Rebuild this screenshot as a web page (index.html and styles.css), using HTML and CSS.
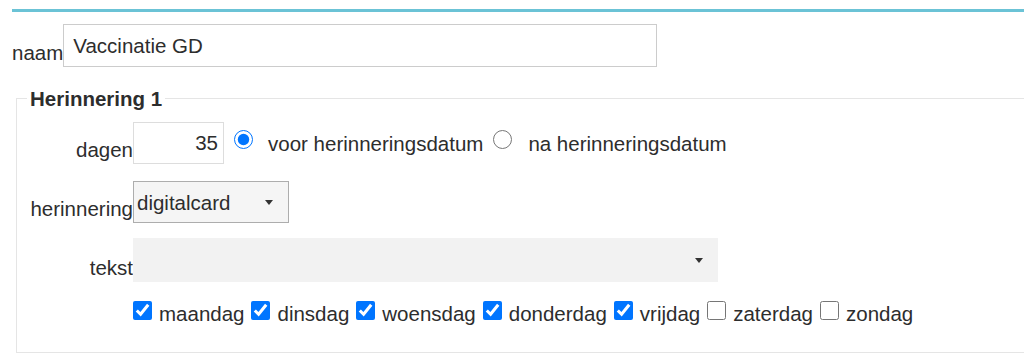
FILE: index.html
```html
<!DOCTYPE html>
<html lang="nl">
<head>
    <meta charset="UTF-8">
    <meta name="viewport" content="width=device-width, initial-scale=1.0">
    <title>Herinnering</title>
    <link rel="stylesheet" href="styles.css">
</head>
<body>
    <div class="page">
        <div class="topline"></div>

        <!-- Naam -->
        <div class="name-row">
            <label class="name-label" for="naam">naam</label>
            <input id="naam" class="name-input" type="text" value="Vaccinatie GD">
        </div>

        <!-- Herinnering 1 -->
        <fieldset class="reminder">
            <legend>Herinnering 1</legend>

            <div class="field-row field-row-first">
                <label class="field-label" for="dagen">dagen</label>
                <div class="field-controls">
                    <input id="dagen" class="days-input" type="text" value="35">
                    <input class="radio" type="radio" name="moment" id="voor" checked>
                    <label class="radio-label" for="voor">voor herinneringsdatum</label>
                    <input class="radio radio-second" type="radio" name="moment" id="na">
                    <label class="radio-label" for="na">na herinneringsdatum</label>
                </div>
            </div>

            <div class="field-row field-row-type">
                <span class="field-label">herinnering</span>
                <div class="dropdown dropdown-type">
                    <span>digitalcard</span>
                    <span class="caret"></span>
                </div>
            </div>

            <div class="field-row field-row-text">
                <span class="field-label">tekst</span>
                <div class="dropdown dropdown-text">
                    <span></span>
                    <span class="caret"></span>
                </div>
            </div>

            <div class="days-row">
                <label class="day"><input type="checkbox" checked>maandag</label>
                <label class="day"><input type="checkbox" checked>dinsdag</label>
                <label class="day"><input type="checkbox" checked>woensdag</label>
                <label class="day"><input type="checkbox" checked>donderdag</label>
                <label class="day"><input type="checkbox" checked>vrijdag</label>
                <label class="day"><input type="checkbox">zaterdag</label>
                <label class="day"><input type="checkbox">zondag</label>
            </div>
        </fieldset>
    </div>
</body>
</html>
```

FILE: styles.css
```css
:root {
    --text-primary: #2d2d2d;
    --line-accent: #6bc3d6;
    --border-light: #e5e5e5;
    --border-input: #cccccc;
    --border-select: #adadad;
    --bg-select: #f5f5f5;
    --bg-select-flat: #f2f2f2;
    --label-width: 116px;
}

* {
    box-sizing: border-box;
}

html,
body {
    margin: 0;
    padding: 0;
    overflow: hidden;
}

body {
    font-family: 'Liberation Sans', Arial, sans-serif;
    font-size: 20.5px;
    line-height: 23px;
    color: var(--text-primary);
    background-color: #fff;
}

.page {
    width: 1100px;
    padding: 9px 0 0 12px;
}

.topline {
    height: 3px;
    background-color: var(--line-accent);
}

input {
    font-family: inherit;
    font-size: 20.5px;
    color: var(--text-primary);
    margin: 0;
}

.name-row {
    display: flex;
    align-items: flex-end;
    margin-top: 12px;
}

.name-label {
    padding-bottom: 3px;
}

.name-input {
    width: 594px;
    height: 43px;
    border: 1px solid var(--border-input);
    padding: 0 9px;
    outline: none;
}

.reminder {
    margin: 20px 0 0 4px;
    border: 1px solid var(--border-light);
    padding: 0 0 27px 0;
}

.reminder legend {
    margin-left: 10px;
    padding: 0 3px;
    font-weight: bold;
}

.field-row {
    display: flex;
    align-items: flex-end;
}

.field-row-first {
    margin-top: 12px;
}

.field-row-type {
    margin-top: 17px;
}

.field-row-text {
    margin-top: 15px;
}

.field-label {
    width: var(--label-width);
    flex-shrink: 0;
    text-align: right;
    padding-bottom: 3px;
}

.field-controls {
    display: flex;
    align-items: center;
}

.days-input {
    width: 91px;
    height: 42px;
    border: 1px solid #dddddd;
    padding: 0 5px 0 4px;
    text-align: right;
    outline: none;
}

.radio {
    width: 19px;
    height: 19px;
    margin: 0 15px 7px 10px;
    accent-color: #0075ff;
}

.radio-second {
    margin-right: 16px;
}

.dropdown {
    display: flex;
    align-items: center;
    justify-content: space-between;
    padding: 0 15px 0 3px;
}

.dropdown-type {
    width: 156px;
    height: 42px;
    border: 1px solid var(--border-select);
    background-color: var(--bg-select);
}

.dropdown-text {
    width: 585px;
    height: 44px;
    background-color: var(--bg-select-flat);
}

.caret {
    width: 0;
    height: 0;
    border-left: 4.5px solid transparent;
    border-right: 4.5px solid transparent;
    border-top: 5px solid #333;
}

.days-row {
    display: flex;
    margin: 19px 0 0 var(--label-width);
}

.day {
    display: flex;
    align-items: flex-end;
    margin-right: 7px;
}

.day input {
    width: 19px;
    height: 19px;
    margin: 0 7px 5px 0;
    accent-color: #0075ff;
}
```
